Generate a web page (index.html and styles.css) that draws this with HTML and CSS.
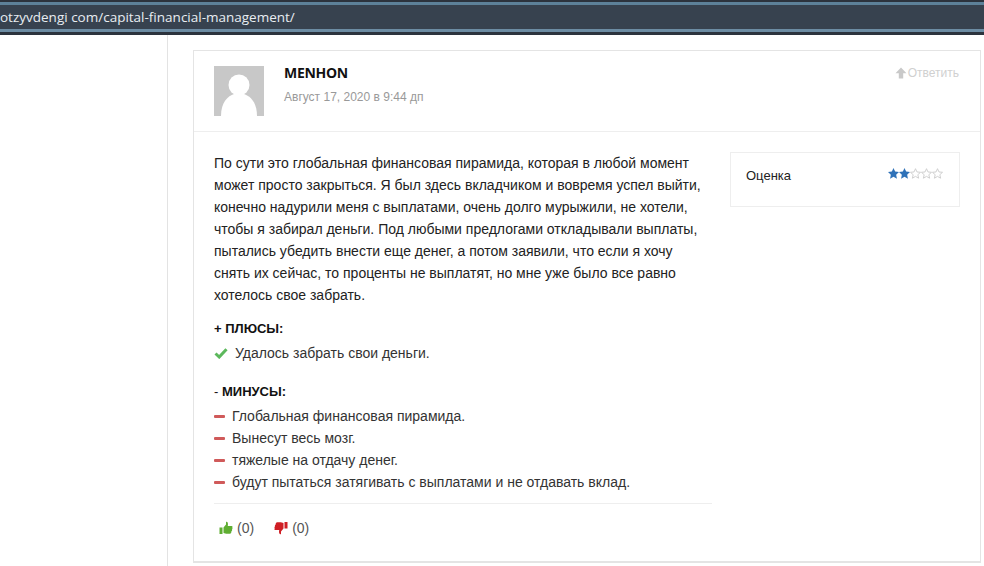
FILE: index.html
```html
<!DOCTYPE html>
<html lang="ru">
<head>
<meta charset="utf-8">
<title>Отзыв</title>
<link rel="stylesheet" href="styles.css">
</head>
<body>
<header class="urlbar">
  <div class="urlbar-edge"></div>
  <div class="urlbar-main"><span class="url">otzyvdengi com/capital-financial-management/</span></div>
  <div class="urlbar-edge low"></div>
</header>
<div class="page">
  <div class="sidebar"></div>
  <main class="content">
    <article class="card">
      <header class="card-head">
        <svg class="avatar" viewBox="0 0 50 50"><rect width="50" height="50" fill="#c8c8c8"/><circle cx="25" cy="19" r="10.5" fill="#fff"/><path d="M7 50c0-14 7-20 13-22h10c6 2 13 8 13 22z" fill="#fff"/></svg>
        <div class="author">
          <div class="name">MENHON</div>
          <div class="date">Август 17, 2020 в 9:44 дп</div>
        </div>
        <a class="reply"><svg class="reply-icon" viewBox="0 0 12 12"><path d="M6 0.5 11.5 6.2H8.2V11.5H3.8V6.2H0.5z" fill="#c9c9c9"/></svg>Ответить</a>
      </header>
      <div class="card-body">
        <div class="main-col">
          <p class="text">По сути это глобальная финансовая пирамида, которая в любой момент может просто закрыться. Я был здесь вкладчиком и вовремя успел выйти, конечно надурили меня с выплатами, очень долго мурыжили, не хотели, чтобы я забирал деньги. Под любыми предлогами откладывали выплаты, пытались убедить внести еще денег, а потом заявили, что если я хочу снять их сейчас, то проценты не выплатят, но мне уже было все равно хотелось свое забрать.</p>
          <h4 class="section-title">+ ПЛЮСЫ:</h4>
          <ul class="list pros">
            <li><svg class="check" viewBox="0 0 14 12"><path d="M1.5 6.5 5.2 10 12.5 2.2" fill="none" stroke="#5cb85c" stroke-width="3"/></svg>Удалось забрать свои деньги.</li>
          </ul>
          <h4 class="section-title minus-title"><span class="thin">- </span>МИНУСЫ:</h4>
          <ul class="list cons">
            <li><span class="dash"></span>Глобальная финансовая пирамида.</li>
            <li><span class="dash"></span>Вынесут весь мозг.</li>
            <li><span class="dash"></span>тяжелые на отдачу денег.</li>
            <li><span class="dash"></span>будут пытаться затягивать с выплатами и не отдавать вклад.</li>
          </ul>
          <div class="votes">
            <span class="vote"><svg class="thumb" viewBox="0 0 14 14"><path d="M0.5 6.5H3.5V13H0.5zM4.5 6.5 7 3.5V0.8C8.7 0.6 9.4 2.2 8.8 5H12.6C13.6 5 13.8 6 13.3 6.6 13.7 7.3 13.5 8 13 8.4 13.3 9.2 13 9.9 12.4 10.2 12.5 11.2 12 12.8 10.8 12.8H7.2L4.5 12z" fill="#5fae32"/></svg>(0)</span>
            <span class="vote"><svg class="thumb" viewBox="0 0 14 14"><g transform="translate(14 14) rotate(180)"><path d="M0.5 6.5H3.5V13H0.5zM4.5 6.5 7 3.5V0.8C8.7 0.6 9.4 2.2 8.8 5H12.6C13.6 5 13.8 6 13.3 6.6 13.7 7.3 13.5 8 13 8.4 13.3 9.2 13 9.9 12.4 10.2 12.5 11.2 12 12.8 10.8 12.8H7.2L4.5 12z" fill="#cf1f25"/></g></svg>(0)</span>
          </div>
        </div>
        <aside class="rating">
          <span class="rating-label">Оценка</span>
          <span class="stars">
            <svg viewBox="0 0 24 24"><path class="on" d="M12 0 15.6 7.8 24 8.8 17.8 14.6 19.5 23.2 12 18.9 4.5 23.2 6.2 14.6 0 8.8 8.4 7.8z"/></svg>
            <svg viewBox="0 0 24 24"><path class="on" d="M12 0 15.6 7.8 24 8.8 17.8 14.6 19.5 23.2 12 18.9 4.5 23.2 6.2 14.6 0 8.8 8.4 7.8z"/></svg>
            <svg viewBox="0 0 24 24"><path class="off" d="M12 1.5 15.2 8.6 23 9.4 17.1 14.6 18.8 22.3 12 18.3 5.2 22.3 6.9 14.6 1 9.4 8.8 8.6z"/></svg>
            <svg viewBox="0 0 24 24"><path class="off" d="M12 1.5 15.2 8.6 23 9.4 17.1 14.6 18.8 22.3 12 18.3 5.2 22.3 6.9 14.6 1 9.4 8.8 8.6z"/></svg>
            <svg viewBox="0 0 24 24"><path class="off" d="M12 1.5 15.2 8.6 23 9.4 17.1 14.6 18.8 22.3 12 18.3 5.2 22.3 6.9 14.6 1 9.4 8.8 8.6z"/></svg>
          </span>
        </aside>
      </div>
    </article>
  </main>
</div>
</body>
</html>
```
FILE: styles.css
```css
* { box-sizing: border-box; }
html, body { margin: 0; height: 100%; }
body {
  width: 984px;
  height: 566px;
  overflow: hidden;
  background: #fff;
  color: #222;
  font-family: "Liberation Sans", Arial, sans-serif;
  font-size: 14px;
}
.urlbar { height: 35px; background: #2c333d; display: flex; flex-direction: column; padding: 2px 0 3px; }
.urlbar-edge { height: 3px; background: #5d8199; flex: none; }
.urlbar-edge.low { background: #6c8ca3; }
.urlbar-main { flex: 1; background: #37424f; display: flex; align-items: center; padding-bottom: 1px; }
.url { font-family: "Open Sans", sans-serif; font-size: 13.5px; color: #e8edf2; white-space: nowrap; }
.page { display: flex; height: 531px; }
.sidebar { width: 168px; flex: none; border-right: 1px solid #e3e3e3; }
.content { flex: 1; padding: 15px 3px 0 25px; }
.card { height: 513px; border: 1px solid #e4e4e4; border-bottom-width: 2px; }
.card-head { height: 81px; padding: 15px 21px 0 20px; display: flex; border-bottom: 1px solid #eeeeee; }
.avatar { width: 50px; height: 50px; flex: none; }
.author { margin-left: 20px; flex: 1; }
.name { font-family: "Open Sans", sans-serif; font-weight: 700; font-size: 14px; line-height: 16px; letter-spacing: -0.3px; color: #111; margin-top: -1px; }
.date { font-size: 12px; line-height: 14px; color: #999; margin-top: 9px; }
.reply { display: flex; align-items: center; height: 14px; font-size: 12px; color: #d0d0d0; }
.reply-icon { width: 12px; height: 12px; margin-right: 1px; }
.card-body { display: flex; padding: 20px 20px 0; justify-content: space-between; }
.main-col { width: 498px; }
.text { margin: 0; font-size: 14px; line-height: 22px; color: #222; }
.section-title { margin: 15px 0 0; font-size: 13px; line-height: 16px; font-weight: 700; color: #111; }
.minus-title { margin-top: 20px; }
.thin { font-weight: 400; }
.list { list-style: none; margin: 5px 0 0; padding: 0; }
.list li { display: flex; align-items: center; height: 22px; font-size: 14px; color: #333; }
.check { width: 14px; height: 12px; margin-right: 7px; }
.dash { width: 11px; height: 3px; background: #d05a5a; margin-right: 7px; border-radius: 1px; }
.votes { margin-top: 10px; padding: 16px 5px 0; border-top: 1px solid #eeeeee; display: flex; gap: 20px; }
.vote { display: flex; align-items: center; font-size: 14px; color: #555; }
.thumb { width: 14px; height: 14px; margin-right: 4px; }
.rating { width: 230px; height: 55px; border: 1px solid #eeeeee; padding: 15px 16px 0 15px; display: flex; justify-content: space-between; align-items: flex-start; font-size: 13px; color: #222; }
.stars { display: flex; }
.stars svg { width: 11px; height: 11px; }
.on { fill: #2f72b8; }
.off { fill: #fff; stroke: #ccc; stroke-width: 2; }
```
